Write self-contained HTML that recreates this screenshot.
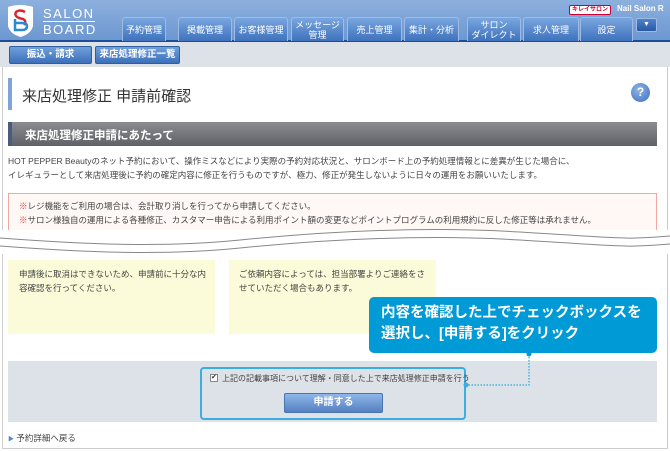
<!DOCTYPE html><html><head><meta charset="utf-8"><style>
*{margin:0;padding:0;box-sizing:border-box}
body{width:670px;height:451px;position:relative;overflow:hidden;background:#fff;font-family:"Liberation Sans","Noto Sans CJK JP",sans-serif;color:#333}
.a{position:absolute}
.hdr{left:0;top:0;width:670px;height:42px;background:linear-gradient(#8db0de,#6c97d0);border-bottom:2px solid #1c4d99}
.tab{position:absolute;top:17px;height:24px;background:linear-gradient(#7aa6df,#3e72bd);border:1px solid #9dbbe4;border-bottom:none;border-radius:3px 3px 0 0;color:#fff;font-size:9px;text-align:center;display:flex;align-items:center;justify-content:center;line-height:10px}
.sub{left:0;top:42px;width:670px;height:25px;background:#dde1e8}
.sb{position:absolute;top:46px;height:18px;background:linear-gradient(#6f9fdc,#3c6fb9);border:1px solid #2f5d9e;border-radius:2px;color:#fff;font-size:9.5px;font-weight:bold;text-align:center;line-height:16px}
.t9{font-size:8.5px;color:#444;white-space:nowrap}
</style></head><body>
<div class="a hdr"></div>
<svg class="a" style="left:7px;top:4px" width="27" height="34" viewBox="0 0 27 34"><path d="M1 3 Q13 -1 26 3 L26 22 Q24 30 13.5 33 Q3 30 1 22Z" fill="#fff"/><path d="M18 8 Q13 5 9 8 Q7 12 12 14 L16 15 Q20 17 17 21" fill="none" stroke="#d8262f" stroke-width="2.5"/><path d="M8 15 L8 26 L15 26 Q20 26 20 22 Q20 19 15 19 L8 19" fill="none" stroke="#2a8ad6" stroke-width="2.5"/></svg>
<div class="a" style="left:43px;top:7px;color:#fff;font-size:13px;letter-spacing:1.5px;line-height:14px;border-bottom:1px solid #fff">SALON</div>
<div class="a" style="left:43px;top:23px;color:#fff;font-size:13px;letter-spacing:1.5px;line-height:14px">BOARD</div>
<div class="a" style="left:569px;top:5px;width:42px;height:10px;background:#fff;border:1px solid #c03;border-radius:2px;color:#c03;font-size:6px;font-weight:bold;text-align:center;line-height:8px">キレイサロン</div>
<div class="a" style="left:617px;top:4px;color:#fff;font-size:8px;font-weight:bold">Nail Salon R</div>
<div class="tab" style="left:122px;width:44px">予約管理</div>
<div class="tab" style="left:178px;width:54px">掲載管理</div>
<div class="tab" style="left:234px;width:54px">お客様管理</div>
<div class="tab" style="left:291px;width:53px">メッセージ<br>管理</div>
<div class="tab" style="left:347px;width:55px">売上管理</div>
<div class="tab" style="left:404px;width:55px">集計・分析</div>
<div class="tab" style="left:467px;width:54px">サロン<br>ダイレクト</div>
<div class="tab" style="left:523px;width:56px">求人管理</div>
<div class="tab" style="left:580px;width:53px">設定</div>
<div class="a" style="left:636px;top:18px;width:21px;height:14px;background:linear-gradient(#4f82c9,#2859a8);border:1px solid #9dbbe4;border-radius:2px;color:#fff;font-size:7px;text-align:center;line-height:12px">▼</div>
<div class="a sub"></div>
<div class="sb" style="left:9px;width:83px">振込・請求</div>
<div class="sb" style="left:95px;width:85px">来店処理修正一覧</div>
<div class="a" style="left:2px;top:67px;width:666px;height:382px;border:1px solid #ccc;border-top:none"></div>
<div class="a" style="left:8px;top:78px;width:4px;height:32px;background:#7ea4d8"></div>
<div class="a" style="left:22px;top:85px;font-size:15px;color:#333">来店処理修正 申請前確認</div>
<div class="a" style="left:631px;top:83px;width:19px;height:19px;border-radius:50%;background:radial-gradient(circle at 40% 35%,#8fb3e6,#3c6fbc);color:#fff;font-weight:bold;font-size:12px;text-align:center;line-height:19px">?</div>
<div class="a" style="left:8px;top:122px;width:649px;height:24px;background:linear-gradient(#8a8c90,#5e6166);border-left:4px solid #4a5c7a"></div>
<div class="a" style="left:25px;top:127px;color:#fff;font-size:11.5px;font-weight:bold">来店処理修正申請にあたって</div>
<div class="a t9" style="left:8px;top:155px">HOT PEPPER Beautyのネット予約において、操作ミスなどにより実際の予約対応状況と、サロンボード上の予約処理情報とに差異が生じた場合に、</div>
<div class="a t9" style="left:8px;top:169px">イレギュラーとして来店処理後に予約の確定内容に修正を行うものですが、極力、修正が発生しないように日々の運用をお願いいたします。</div>
<div class="a" style="left:8px;top:193px;width:649px;height:45px;background:#fff8f5;border:1px solid #f0a8a0"></div>
<div class="a t9" style="left:19px;top:200px"><span style="color:#e33">※</span>レジ機能をご利用の場合は、会計取り消しを行ってから申請してください。</div>
<div class="a t9" style="left:19px;top:214px"><span style="color:#e33">※</span>サロン様独自の運用による各種修正、カスタマー申告による利用ポイント額の変更などポイントプログラムの利用規約に反した修正等は承れません。</div>
<svg class="a" style="left:0;top:224px" width="670" height="36" viewBox="0 0 670 36"><path d="M0 6 H670 V30 H0Z" fill="#fff"/><path d="M0 14 C80 20 160 24 240 16 S420 2 520 8 S620 16 670 12" fill="none" stroke="#888" stroke-width="1"/><path d="M0 22 C80 28 160 32 240 24 S420 10 520 16 S620 24 670 20" fill="none" stroke="#888" stroke-width="1"/></svg>
<div class="a" style="left:8px;top:260px;width:207px;height:74px;background:#fbfbd9"></div>
<div class="a" style="left:229px;top:260px;width:207px;height:74px;background:#fbfbd9"></div>
<div class="a t9" style="left:19px;top:267px;line-height:14px;white-space:normal;width:190px">申請後に取消はできないため、申請前に十分な内容確認を行ってください。</div>
<div class="a t9" style="left:239px;top:267px;line-height:14px;white-space:normal;width:190px">ご依頼内容によっては、担当部署よりご連絡をさせていただく場合もあります。</div>
<div class="a" style="left:8px;top:361px;width:649px;height:61px;background:#dde1e8"></div>
<div class="a" style="left:369px;top:297px;width:288px;height:56px;background:#009ad6;border-radius:5px;color:#fff;font-weight:bold;font-size:14.5px;line-height:21px;padding:6px 12px">内容を確認した上でチェックボックスを選択し、[申請する]をクリック</div>
<svg class="a" style="left:460px;top:350px" width="80" height="40"><circle cx="69" cy="4" r="2.5" fill="#009ad6"/><path d="M69 4 V35 H6" fill="none" stroke="#009ad6" stroke-dasharray="1.5 1.5"/><circle cx="6" cy="35" r="2.5" fill="#3aaee0"/></svg>
<div class="a" style="left:200px;top:367px;width:266px;height:53px;border:2px solid #3aaee0;border-radius:4px"></div>
<div class="a" style="left:210px;top:374px;width:8px;height:8px;background:#fff;border:1px solid #888;font-size:7px;line-height:6px">✔</div>
<div class="a t9" style="left:222px;top:373px;font-size:8px">上記の記載事項について理解・同意した上で来店処理修正申請を行う</div>
<div class="a" style="left:284px;top:393px;width:99px;height:20px;background:linear-gradient(#8fb6ea,#5580c0);border:1px solid #4a74b2;border-radius:2px;color:#fff;font-size:10px;font-weight:bold;text-align:center;line-height:18px">申請する</div>
<div class="a t9" style="left:8px;top:432px"><span style="color:#5b86c6;font-size:6px">▶</span> 予約詳細へ戻る</div>
</body></html>
